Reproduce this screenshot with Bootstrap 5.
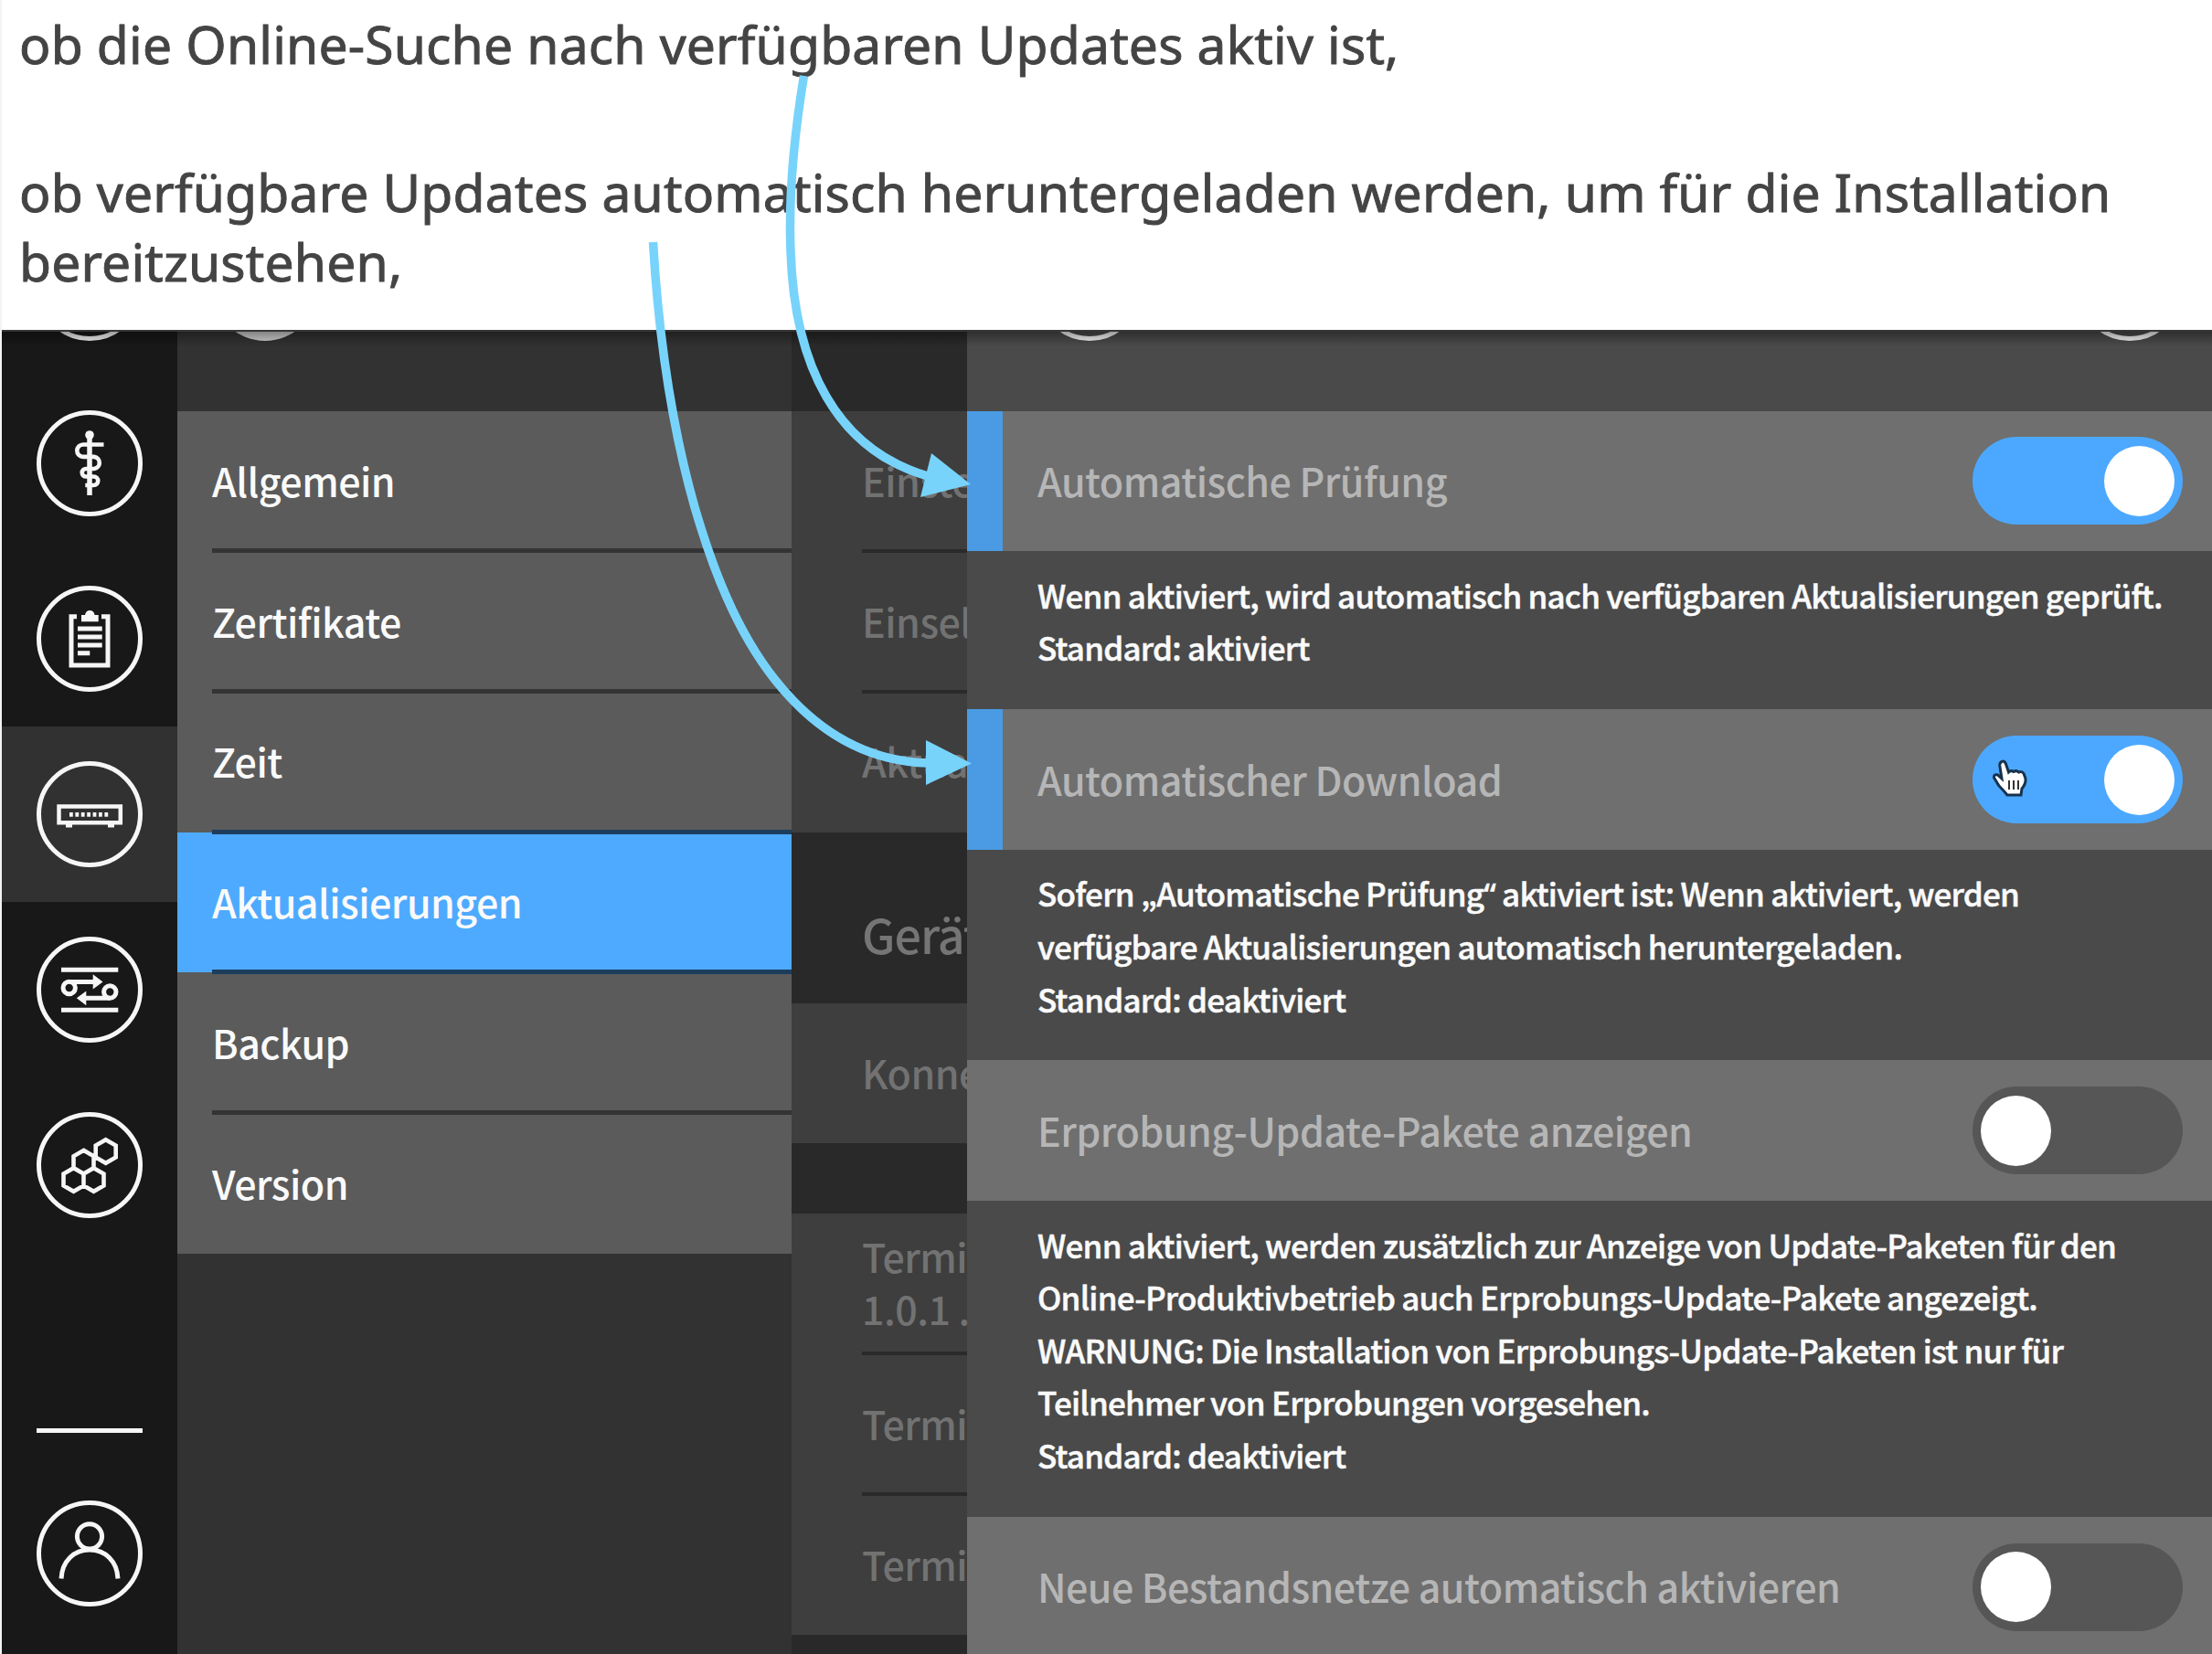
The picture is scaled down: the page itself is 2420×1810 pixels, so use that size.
<!DOCTYPE html>
<html lang="de">
<head>
<meta charset="utf-8">
<title>Aktualisierungen</title>
<link href="https://cdn.jsdelivr.net/npm/bootstrap@5.3.0/dist/css/bootstrap.min.css" rel="stylesheet">
<style>
html,body{width:2420px;height:1810px;overflow:hidden;margin:0}
body{background:#fff;border-left:2px solid #f3f3f3;font-family:"Noto Sans CJK SC",sans-serif;font-size:43px;font-weight:500;letter-spacing:-.54px}
.intro{height:361px;padding:10px 0 0 19px;font-family:"Noto Sans",sans-serif;font-size:57px;line-height:76px;letter-spacing:.16px;color:#444;font-weight:400;-webkit-text-stroke:.9px #444}
.intro p{margin:0;white-space:nowrap}
.intro .gap-line{margin-bottom:86px}
.device{height:1449px;background:#4a4a4a}
.topshade{position:absolute;left:0;top:0;width:100%;height:18px;background:linear-gradient(rgba(0,0,0,.36),rgba(0,0,0,0));border-top:2px solid #363636;z-index:2}
.rail{width:192px;background:#181818}
.rail .slot{height:192px}
.rail .slot.on{background:#313131}
.rail svg,.crop svg{width:120px;height:120px;fill:none;stroke:#f6f6f6;stroke-width:5}
.rail .solid{fill:#f6f6f6;stroke:none}
.rule{width:116px;height:5px;background:#f6f6f6}
.sub{width:672px;background:#323232}
.crop{height:88.5px;overflow:hidden}
.crop.short{height:50px}
.crop svg{margin-top:-106px;flex:none}
.crop .disc{fill:#cfcfcf;stroke:none}
.crop.lead-disc{padding-left:36px}
.crop.pair{padding:0 30px 0 74px}
.userslot{height:242px;padding-top:72px}
.entry{height:153.7px;background:#5b5b5b;color:#fafafa;padding:0 0 2px 38px;white-space:nowrap}
.entry.on{background:#4eaaff}
.split::after{content:"";position:absolute;left:38px;right:0;bottom:-2px;height:5px;background:#343434;z-index:1}
.edge::after{background:#1d3d5c}
.dim{width:192px;background:#292929;color:#727272;overflow:hidden}
.dim .entry,.dim .two{background:#3e3e3e;color:#727272;padding-left:77px}
.dim .split::after{left:77px;background:#2a2a2a;height:4px}
.dim .two{height:153.7px;line-height:57.6px;padding-top:18px;white-space:nowrap}
.dim .head{height:187px;padding:79px 0 0 77px;font-size:52px;line-height:64px;letter-spacing:-1px;white-space:nowrap;color:#757575}
.spacer-top{height:88.5px}
.spacer-mid{height:76.5px}
.panel{width:1362px;background:#4a4a4a}
.opt{height:153.7px;background:#6f6f6f;color:#b6b6b6;padding:0 32px 0 77px;white-space:nowrap}
.opt.on{border-left:39px solid #4a9be3;padding-left:38px}
.opt span{padding-bottom:2px}
.knobtrack{width:230px;height:96px;border-radius:48px;background:#565656;padding:0 9px}
.knobtrack.on{background:#4ca8ff}
.knobtrack i{width:77px;height:77px;border-radius:50%;background:#fff}
.desc{padding:18.5px 0 39.3px 77px;font-size:35px;line-height:57.6px;letter-spacing:-.77px;color:#fafafa;white-space:nowrap;-webkit-text-stroke:.5px #fafafa}
.desc q{quotes:none;font-family:"Noto Sans",sans-serif;line-height:0}
.desc q::before,.desc q::after{content:none}
.arrows{position:absolute;left:-2px;top:0;z-index:5}
.hand{position:absolute;left:20px;top:24px}
</style>
</head>
<body class="position-relative">
<header class="intro">
<p class="gap-line">ob die Online-Suche nach verfügbaren Updates aktiv ist,</p>
<p>ob verfügbare Updates automatisch heruntergeladen werden, um für die Installation<br>bereitzustehen,</p>
</header>
<main class="device d-flex position-relative">
<div class="topshade"></div>
<nav class="rail d-flex flex-column flex-shrink-0 align-items-stretch">
<div class="crop short d-flex justify-content-center"><svg viewBox="-60 -60 120 120"><circle r="55.5"/></svg></div>
<div class="slot d-flex align-items-center justify-content-center"><svg viewBox="-60 -60 120 120"><circle r="55.5"/><circle class="solid" cy="-31" r="4.8"/><path d="M0-31V35" stroke-width="5.5"/><path stroke-width="4.6" d="M15.5-20.5H-7a6.7 6.7 0 0 0 0 13.4H5A6.6 6.6 0 0 1 5 6H-4A4.2 4.2 0 0 0-4 14.5H4.5A4.7 4.7 0 0 1 4.5 24H-4.7"/></svg></div>
<div class="slot d-flex align-items-center justify-content-center"><svg viewBox="-60 -60 120 120"><circle r="55.5"/><path d="M-14-24.2H-20V29H20V-24.2H13M-13-11H13.7M-13-2H13.7M-13 7H13.7M-13 15.7H.3"/><path class="solid" d="M-9-18.8V-26H-5Q-4-31 .3-31T5.6-26H9.7V-18.8Z"/></svg></div>
<div class="slot on d-flex align-items-center justify-content-center"><svg viewBox="-60 -60 120 120"><circle r="55.5"/><path stroke-width="4.5" d="M-33.5-8.5H33.8V9.2H-33.5Z"/><path stroke-dasharray="3.8 2.6" stroke-width="4.8" d="M-22 .4H22.6"/><path d="M-26 12H-19M20 12H27"/></svg></div>
<div class="slot d-flex align-items-center justify-content-center"><svg viewBox="-60 -60 120 120"><circle r="55.5"/><path d="M-31-21.7H31.3M-31 22.3H31.3M-22.3-8.6H6M22.3 9.3H-6"/><circle cx="-22.3" cy="-2" r="6.7"/><circle cx="22.3" cy="2.5" r="6.7"/><path class="solid" d="M3.7-16.7L14.5-8.6 3.7-.5ZM-3.7 1.5L-14.2 9.3-3.7 17.3Z"/></svg></div>
<div class="slot d-flex align-items-center justify-content-center"><svg viewBox="-60 -60 120 120"><circle r="55.5"/><path stroke-width="4.6" d="M17.7-27.8l11 6.4v12.8l-11 6.4-11-6.4v-12.8zM-6.5-16.2l11 6.4V3l-11 6.4-11-6.4v-12.8zM-17.5 3.2l11 6.4v12.8l-11 6.4-11-6.4V9.6zM4.5 3.2l11 6.4v12.8l-11 6.4-11-6.4V9.6z"/></svg></div>
<div class="flex-grow-1"></div>
<div class="rule mx-auto"></div>
<div class="userslot d-flex justify-content-center"><svg viewBox="-60 -60 120 120"><circle r="55.5"/><circle cy="-18.7" r="13.6"/><path d="M-31 27.5C-30 8-17-4 0-4S30 8 31 27.5"/></svg></div>
</nav>
<nav class="sub flex-shrink-0">
<div class="crop lead-disc d-flex"><svg viewBox="-60 -60 120 120"><circle class="disc" r="58"/></svg></div>
<div class="entry split position-relative d-flex align-items-center">Allgemein</div>
<div class="entry split position-relative d-flex align-items-center">Zertifikate</div>
<div class="entry split edge position-relative d-flex align-items-center">Zeit</div>
<div class="entry on split edge position-relative d-flex align-items-center">Aktualisierungen</div>
<div class="entry split position-relative d-flex align-items-center">Backup</div>
<div class="entry d-flex align-items-center">Version</div>
</nav>
<section class="dim flex-shrink-0">
<div class="spacer-top"></div>
<div class="entry split position-relative d-flex align-items-center">Einste</div>
<div class="entry split position-relative d-flex align-items-center">Einsel</div>
<div class="entry d-flex align-items-center">Aktua</div>
<div class="head">Gerät</div>
<div class="entry d-flex align-items-center">Konne</div>
<div class="spacer-mid"></div>
<div class="two split position-relative">Termi<br>1.0.1 ..</div>
<div class="entry split position-relative d-flex align-items-center">Termi</div>
<div class="entry d-flex align-items-center">Termi</div>
</section>
<section class="panel flex-shrink-0">
<div class="crop pair d-flex justify-content-between"><svg viewBox="-60 -60 120 120"><circle r="55.5"/></svg><svg viewBox="-60 -60 120 120"><circle r="55.5"/></svg></div>
<div class="opt on d-flex align-items-center justify-content-between"><span>Automatische Prüfung</span><div class="knobtrack on d-flex align-items-center justify-content-end"><i></i></div></div>
<div class="desc">Wenn aktiviert, wird automatisch nach verfügbaren Aktualisierungen geprüft.<br>Standard: aktiviert</div>
<div class="opt on d-flex align-items-center justify-content-between"><span>Automatischer Download</span><div class="knobtrack on position-relative d-flex align-items-center justify-content-end"><svg class="hand" width="42" height="46" viewBox="0 0 42 46"><path d="M12 4.5Q15 3 16.5 7L19.5 16Q22 13.5 25 15.5 28 13.5 30.5 16 34 14.5 36 17.5L38 23Q38.5 29 34 34L33 41H18Q14 36 9 31L3.5 22Q3 18 7.5 19L12 23 9.8 9Q9.5 5.5 12 4.5Z" fill="#fff" stroke="#17324d" stroke-width="3"/><path d="M20 25V35M25 25V35M30 25V35" stroke="#333" stroke-width="2"/></svg><i></i></div></div>
<div class="desc">Sofern „Automatische Prüfung<q>“</q> aktiviert ist: Wenn aktiviert, werden<br>verfügbare Aktualisierungen automatisch heruntergeladen.<br>Standard: deaktiviert</div>
<div class="opt d-flex align-items-center justify-content-between"><span>Erprobung-Update-Pakete anzeigen</span><div class="knobtrack d-flex align-items-center"><i></i></div></div>
<div class="desc">Wenn aktiviert, werden zusätzlich zur Anzeige von Update-Paketen für den<br>Online-Produktivbetrieb auch Erprobungs-Update-Pakete angezeigt.<br>WARNUNG: Die Installation von Erprobungs-Update-Paketen ist nur für<br>Teilnehmer von Erprobungen vorgesehen.<br>Standard: deaktiviert</div>
<div class="opt d-flex align-items-center justify-content-between"><span>Neue Bestandsnetze automatisch aktivieren</span><div class="knobtrack d-flex align-items-center"><i></i></div></div>
</section>
</main>
<svg class="arrows" width="2420" height="1810" viewBox="0 0 2420 1810" fill="none" stroke="#78d3fb" stroke-width="9.5"><path d="M879.5 83C866 165 863 225 865 275C869 400 915 492 1015 521"/><path d="M714.5 265C720 360 733 460 760 555C779 620 805 690 848 744C890 797 945 833 1015 835"/><path fill="#78d3fb" stroke="none" d="M1062 530L1019 496 1007 544ZM1063 835.5L1013 810V859Z"/></svg>
<script src="https://cdn.jsdelivr.net/npm/bootstrap@5.3.0/dist/js/bootstrap.bundle.min.js"></script>
</body>
</html>
